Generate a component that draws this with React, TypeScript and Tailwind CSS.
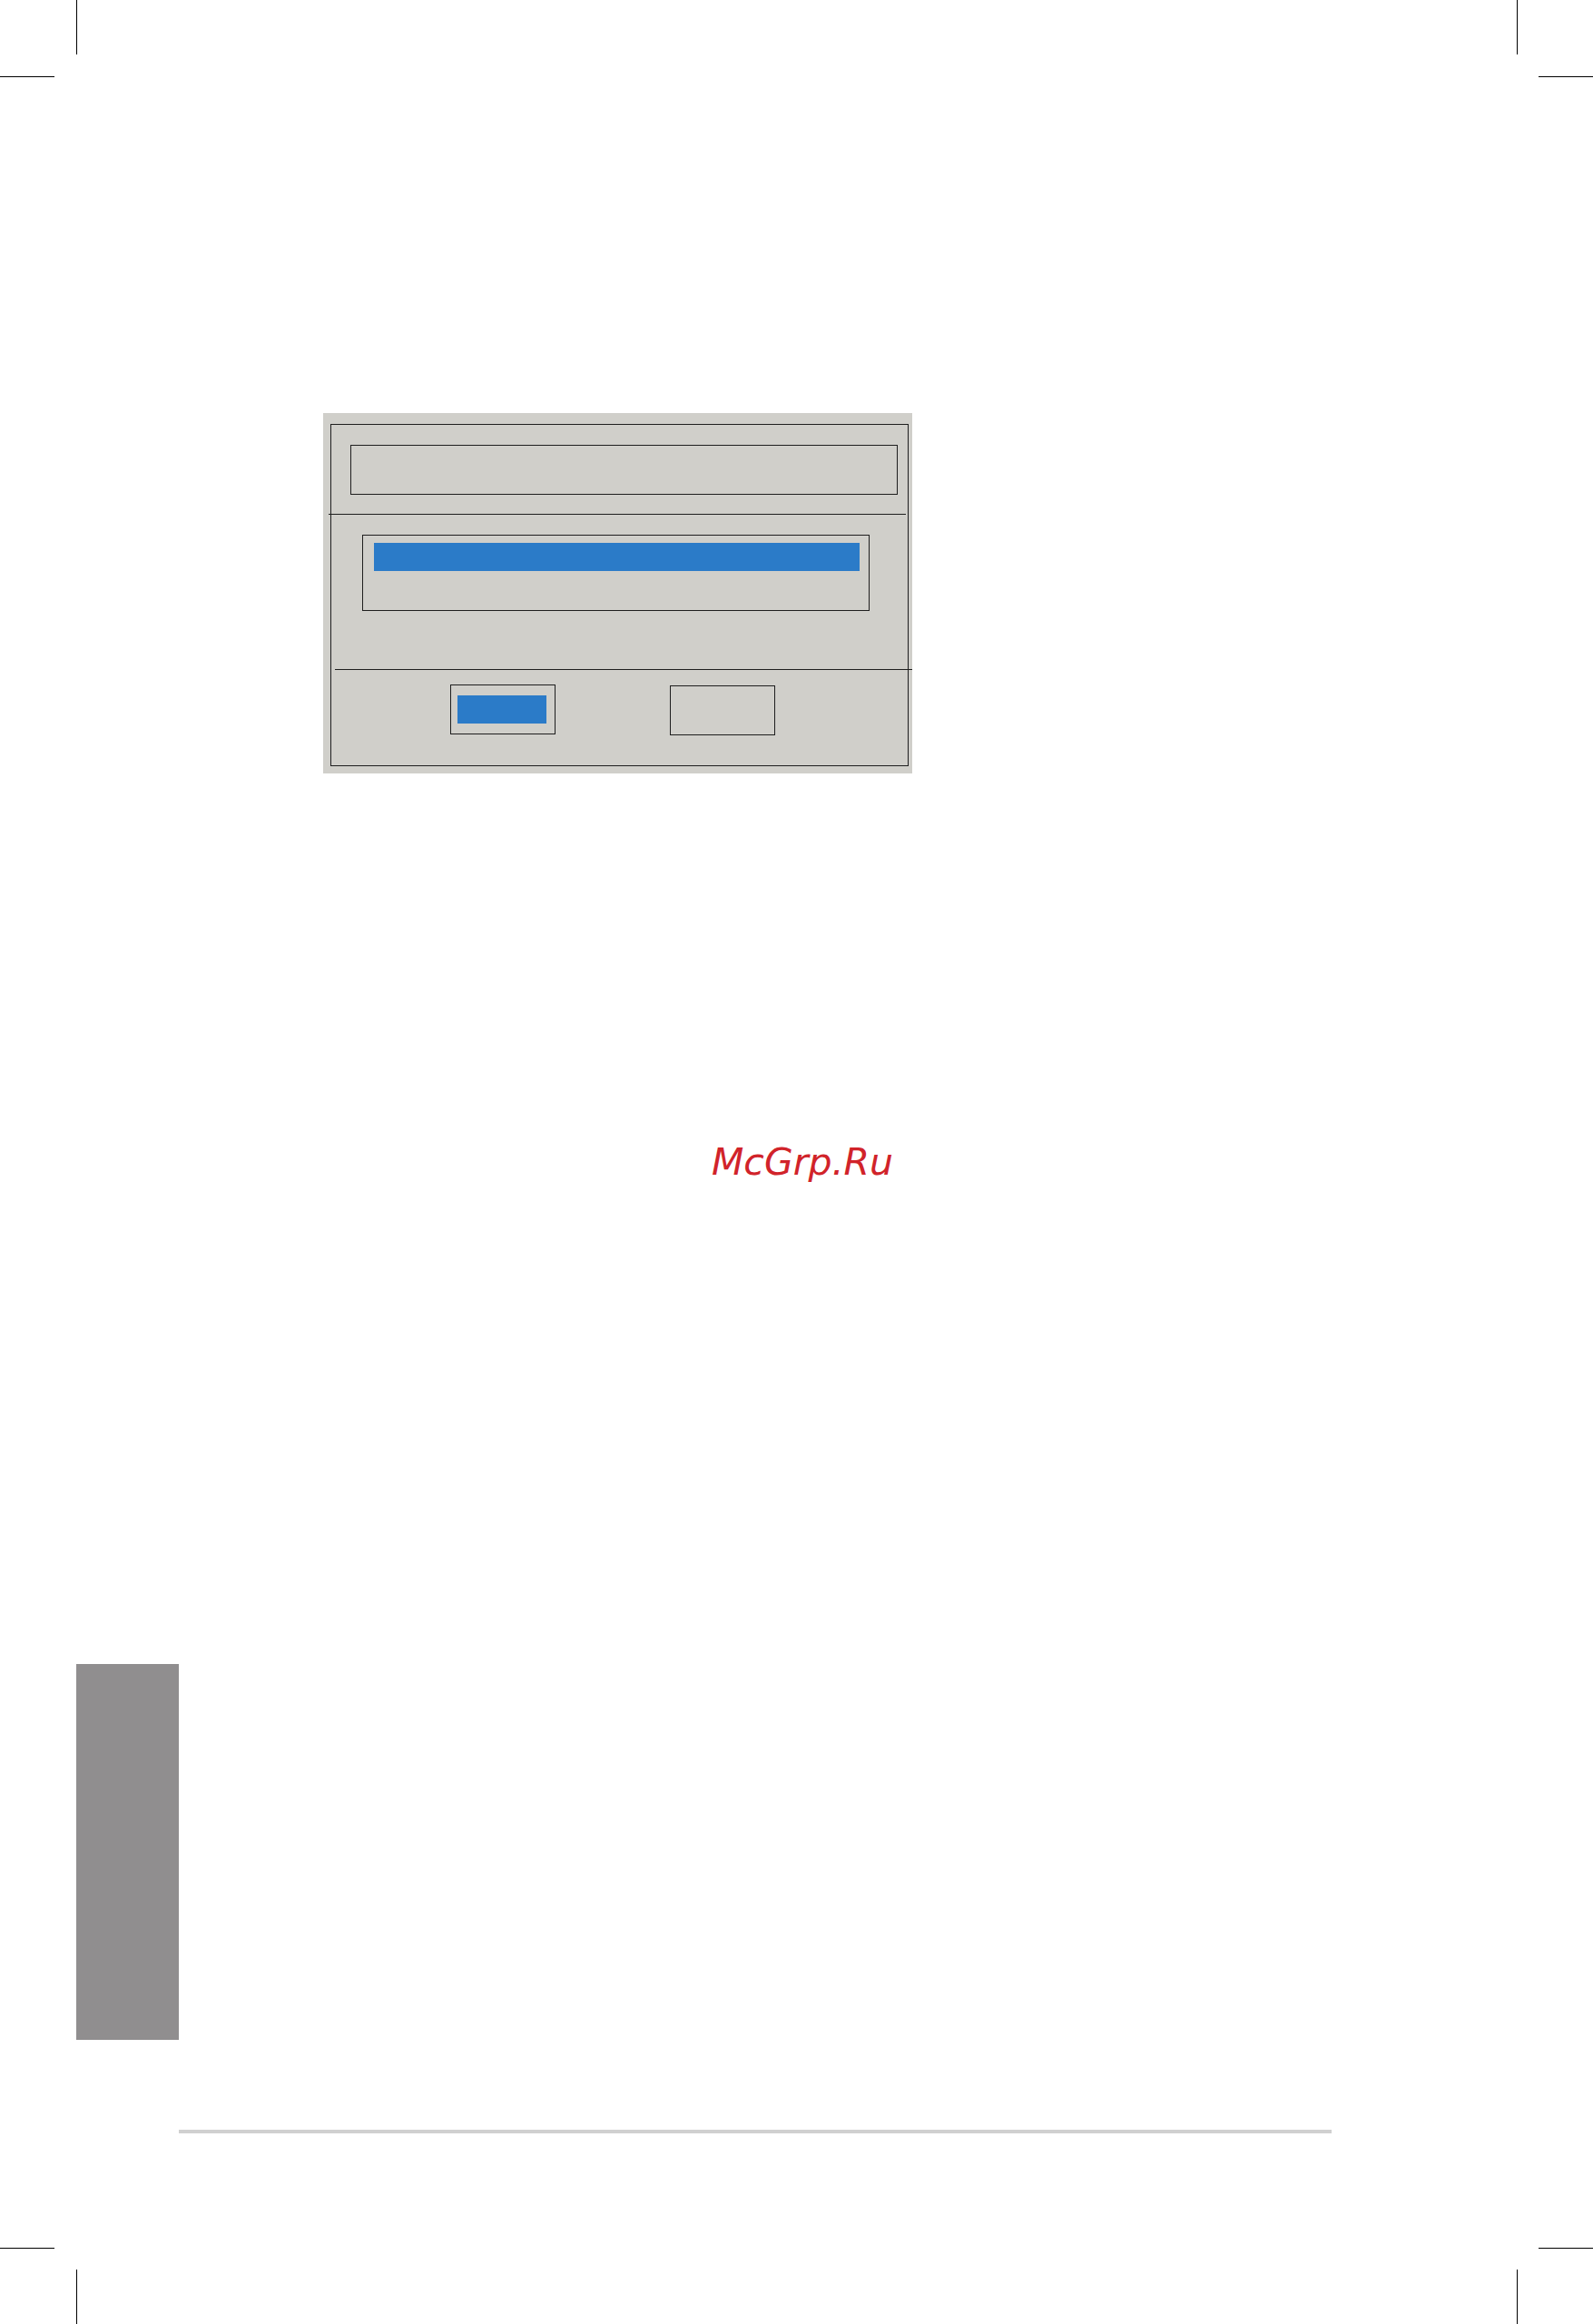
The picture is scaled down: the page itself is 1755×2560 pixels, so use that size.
import React from 'react';

// Crop marks sitting in the page corners
const CropMarks: React.FC = () => (
  <>
    <div className="absolute left-[84px] top-0 h-[60px] w-px bg-black" />
    <div className="absolute left-0 top-[84px] h-px w-[60px] bg-black" />
    <div className="absolute left-[1671px] top-0 h-[60px] w-px bg-black" />
    <div className="absolute left-[1695px] top-[84px] h-px w-[60px] bg-black" />
    <div className="absolute left-0 top-[2476px] h-px w-[60px] bg-black" />
    <div className="absolute left-[84px] top-[2500px] h-[60px] w-px bg-black" />
    <div className="absolute left-[1695px] top-[2476px] h-px w-[60px] bg-black" />
    <div className="absolute left-[1671px] top-[2500px] h-[60px] w-px bg-black" />
  </>
);

const SelectDialog: React.FC = () => (
  <div className="ml-[356px] mt-[455px] w-[649px] h-[397px] bg-[#d0cfca] pl-[8px] pt-[12px]">
    <div className="w-[637px] h-[377px] border border-[#1e1e1e] flex flex-col">
      {/* title field */}
      <div className="ml-[21px] mt-[22px] w-[603px] h-[55px] border border-[#1e1e1e]" />
      <div className="-ml-[3px] mt-[21px] w-[636px] h-px bg-[#1e1e1e]" />

      {/* list with the highlighted entry */}
      <div className="ml-[34px] mt-[22px] w-[559px] h-[84px] border border-[#1e1e1e] pl-[12px] pt-[8px]">
        <div className="w-[535px] h-[31px] bg-[#2b7bc8]" />
      </div>

      <div className="ml-[4px] mt-[64px] w-[636px] h-px bg-[#1e1e1e]" />

      {/* buttons */}
      <div className="mt-[16px] flex items-start">
        <div className="ml-[131px] w-[116px] h-[55px] border border-[#1e1e1e] pl-[7px] pt-[11px]">
          <div className="w-[98px] h-[31px] bg-[#2b7bc8]" />
        </div>
        <div className="ml-[126px] mt-px w-[116px] h-[55px] border border-[#1e1e1e]" />
      </div>
    </div>
  </div>
);

export default function App() {
  return (
    <div className="relative w-[1755px] h-[2560px] overflow-hidden bg-white flex flex-col">
      <CropMarks />

      <SelectDialog />

      <div
        className="ml-[784px] mt-[408px] text-[41px] leading-[41px] italic text-[#d1232a] whitespace-nowrap"
        style={{ fontFamily: '"DejaVu Sans", sans-serif' }}
      >
        McGrp.Ru
      </div>

      {/* side chapter tab */}
      <div className="ml-[84px] mt-[532px] w-[113px] h-[414px] bg-[#908e8f]" />

      {/* footer rule */}
      <div className="ml-[197px] mt-[99px] w-[1270px] h-[4px] bg-[#d0d0d0]" />
    </div>
  );
}
